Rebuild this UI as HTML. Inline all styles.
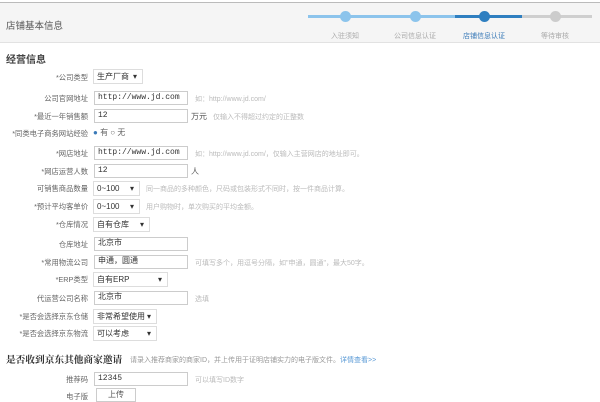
<!DOCTYPE html>
<html><head><meta charset="utf-8"><style>
*{margin:0;padding:0;box-sizing:border-box}
body{width:600px;height:400px;background:#fff;font-family:"Liberation Sans","Noto Sans CJK SC",sans-serif;position:relative;overflow:hidden;color:#333}
.a{position:absolute;white-space:nowrap}
.hd{position:absolute;left:0;top:2px;width:600px;height:41px;background:#f5f5f5;border-top:1px solid #bbb;border-bottom:1px solid #e2e2e2}
.lb{position:absolute;right:512px;font-size:7.3px;color:#666;text-align:right;white-space:nowrap}
.in{position:absolute;left:94px;width:94px;height:14px;border:1px solid #ccc;background:#fff;font-family:"Liberation Mono","Noto Sans CJK SC",monospace;font-size:8px;line-height:12px;padding-left:3px;color:#333}
.sel{position:absolute;left:93px;height:15px;border:1px solid #ddd;background:#fff;font-size:8px;line-height:13px;padding-left:3px;color:#333}
.sel:after{content:"▾";position:absolute;right:5px;top:0;font-size:8px}
.h{position:absolute;font-size:7px;color:#bbb;white-space:nowrap}
.st{position:absolute;font-size:7px;color:#aaa;top:31px;transform:translateX(-50%)}
.c{position:absolute;top:11px;width:11px;height:11px;border-radius:50%;margin-left:-5px}
</style></head><body>
<div class="hd"></div>
<div class="a" style="left:6px;top:18px;font-size:9.5px;color:#555">店铺基本信息</div>
<div class="a" style="left:308px;top:15px;width:155px;height:3px;background:#8cc4ec"></div>
<div class="a" style="left:455px;top:15px;width:70px;height:3px;background:#2f7fc0"></div>
<div class="a" style="left:522px;top:15px;width:70px;height:3px;background:#cfcfcf"></div>
<div class="c" style="left:345px;background:#8cc4ec"></div>
<div class="c" style="left:415px;background:#8cc4ec"></div>
<div class="c" style="left:484px;background:#2f7fc0"></div>
<div class="c" style="left:555px;background:#ccc"></div>
<div class="st" style="left:345px">入驻须知</div>
<div class="st" style="left:415px">公司信息认证</div>
<div class="st" style="left:484px;color:#3a7ab8">店铺信息认证</div>
<div class="st" style="left:555px">等待审核</div>
<div class="a" style="left:6px;top:51px;font-size:10px;font-weight:bold;color:#444">经营信息</div>

<div class="lb" style="top:73px">*公司类型</div><div class="sel" style="top:69px;width:50px">生产厂商</div>
<div class="lb" style="top:94px">公司官网地址</div><div class="in" style="top:91px">http://www.jd.com</div><div class="h" style="left:195px;top:94px">如：http://www.jd.com/</div>
<div class="lb" style="top:112px">*最近一年销售额</div><div class="in" style="top:109px">12</div><div class="a" style="left:191px;top:111px;font-size:8px;color:#555">万元</div><div class="h" style="left:213px;top:112px">仅输入不得超过约定的正整数</div>
<div class="lb" style="top:129px">*同类电子商务网站经验</div><div class="a" style="left:93px;top:127px;font-size:8px;color:#666"><span style="color:#3a7ab8">●</span> 有 ○ 无</div>
<div class="lb" style="top:149px">*网店地址</div><div class="in" style="top:146px">http://www.jd.com</div><div class="h" style="left:195px;top:149px">如：http://www.jd.com/，仅输入主营网店的地址即可。</div>
<div class="lb" style="top:167px">*网店运营人数</div><div class="in" style="top:164px">12</div><div class="a" style="left:191px;top:166px;font-size:8px;color:#555">人</div>
<div class="lb" style="top:184px">可销售商品数量</div><div class="sel" style="top:181px;width:47px">0~100</div><div class="h" style="left:146px;top:184px">同一商品的多种颜色，尺码或包装形式不同时，按一件商品计算。</div>
<div class="lb" style="top:202px">*预计平均客单价</div><div class="sel" style="top:199px;width:47px">0~100</div><div class="h" style="left:146px;top:202px">用户购物时，单次购买的平均金额。</div>
<div class="lb" style="top:220px">*仓库情况</div><div class="sel" style="top:217px;width:57px">自有仓库</div>
<div class="lb" style="top:240px">仓库地址</div><div class="in" style="top:237px">北京市</div>
<div class="lb" style="top:258px">*常用物流公司</div><div class="in" style="top:255px">申通，圆通</div><div class="h" style="left:195px;top:258px">可填写多个，用逗号分隔，如"申通，圆通"，最大50字。</div>
<div class="lb" style="top:275px">*ERP类型</div><div class="sel" style="top:272px;width:75px">自有ERP</div>
<div class="lb" style="top:294px">代运营公司名称</div><div class="in" style="top:291px">北京市</div><div class="h" style="left:195px;top:294px">选填</div>
<div class="lb" style="top:312px">*是否会选择京东仓储</div><div class="sel" style="top:309px;width:64px">非常希望使用</div>
<div class="lb" style="top:329px">*是否会选择京东物流</div><div class="sel" style="top:326px;width:64px">可以考虑</div>
<div class="a" style="left:6px;top:352px;font-size:9.7px;font-weight:bold;color:#333;font-family:'Noto Serif CJK SC',serif">是否收到京东其他商家邀请</div>
<div class="h" style="left:130px;top:355px;color:#999">请录入推荐商家的商家ID，并上传用于证明店铺实力的电子版文件。<span style="color:#5a9ad6">详情查看&gt;&gt;</span></div>
<div class="lb" style="top:375px">推荐码</div><div class="in" style="top:372px">12345</div><div class="h" style="left:195px;top:375px">可以填写ID数字</div>
<div class="lb" style="top:392px">电子版</div><div class="a" style="left:96px;top:388px;width:40px;height:14px;border:1px solid #ccc;font-size:8px;text-align:center;line-height:12px;color:#555">上传</div>
</body></html>
